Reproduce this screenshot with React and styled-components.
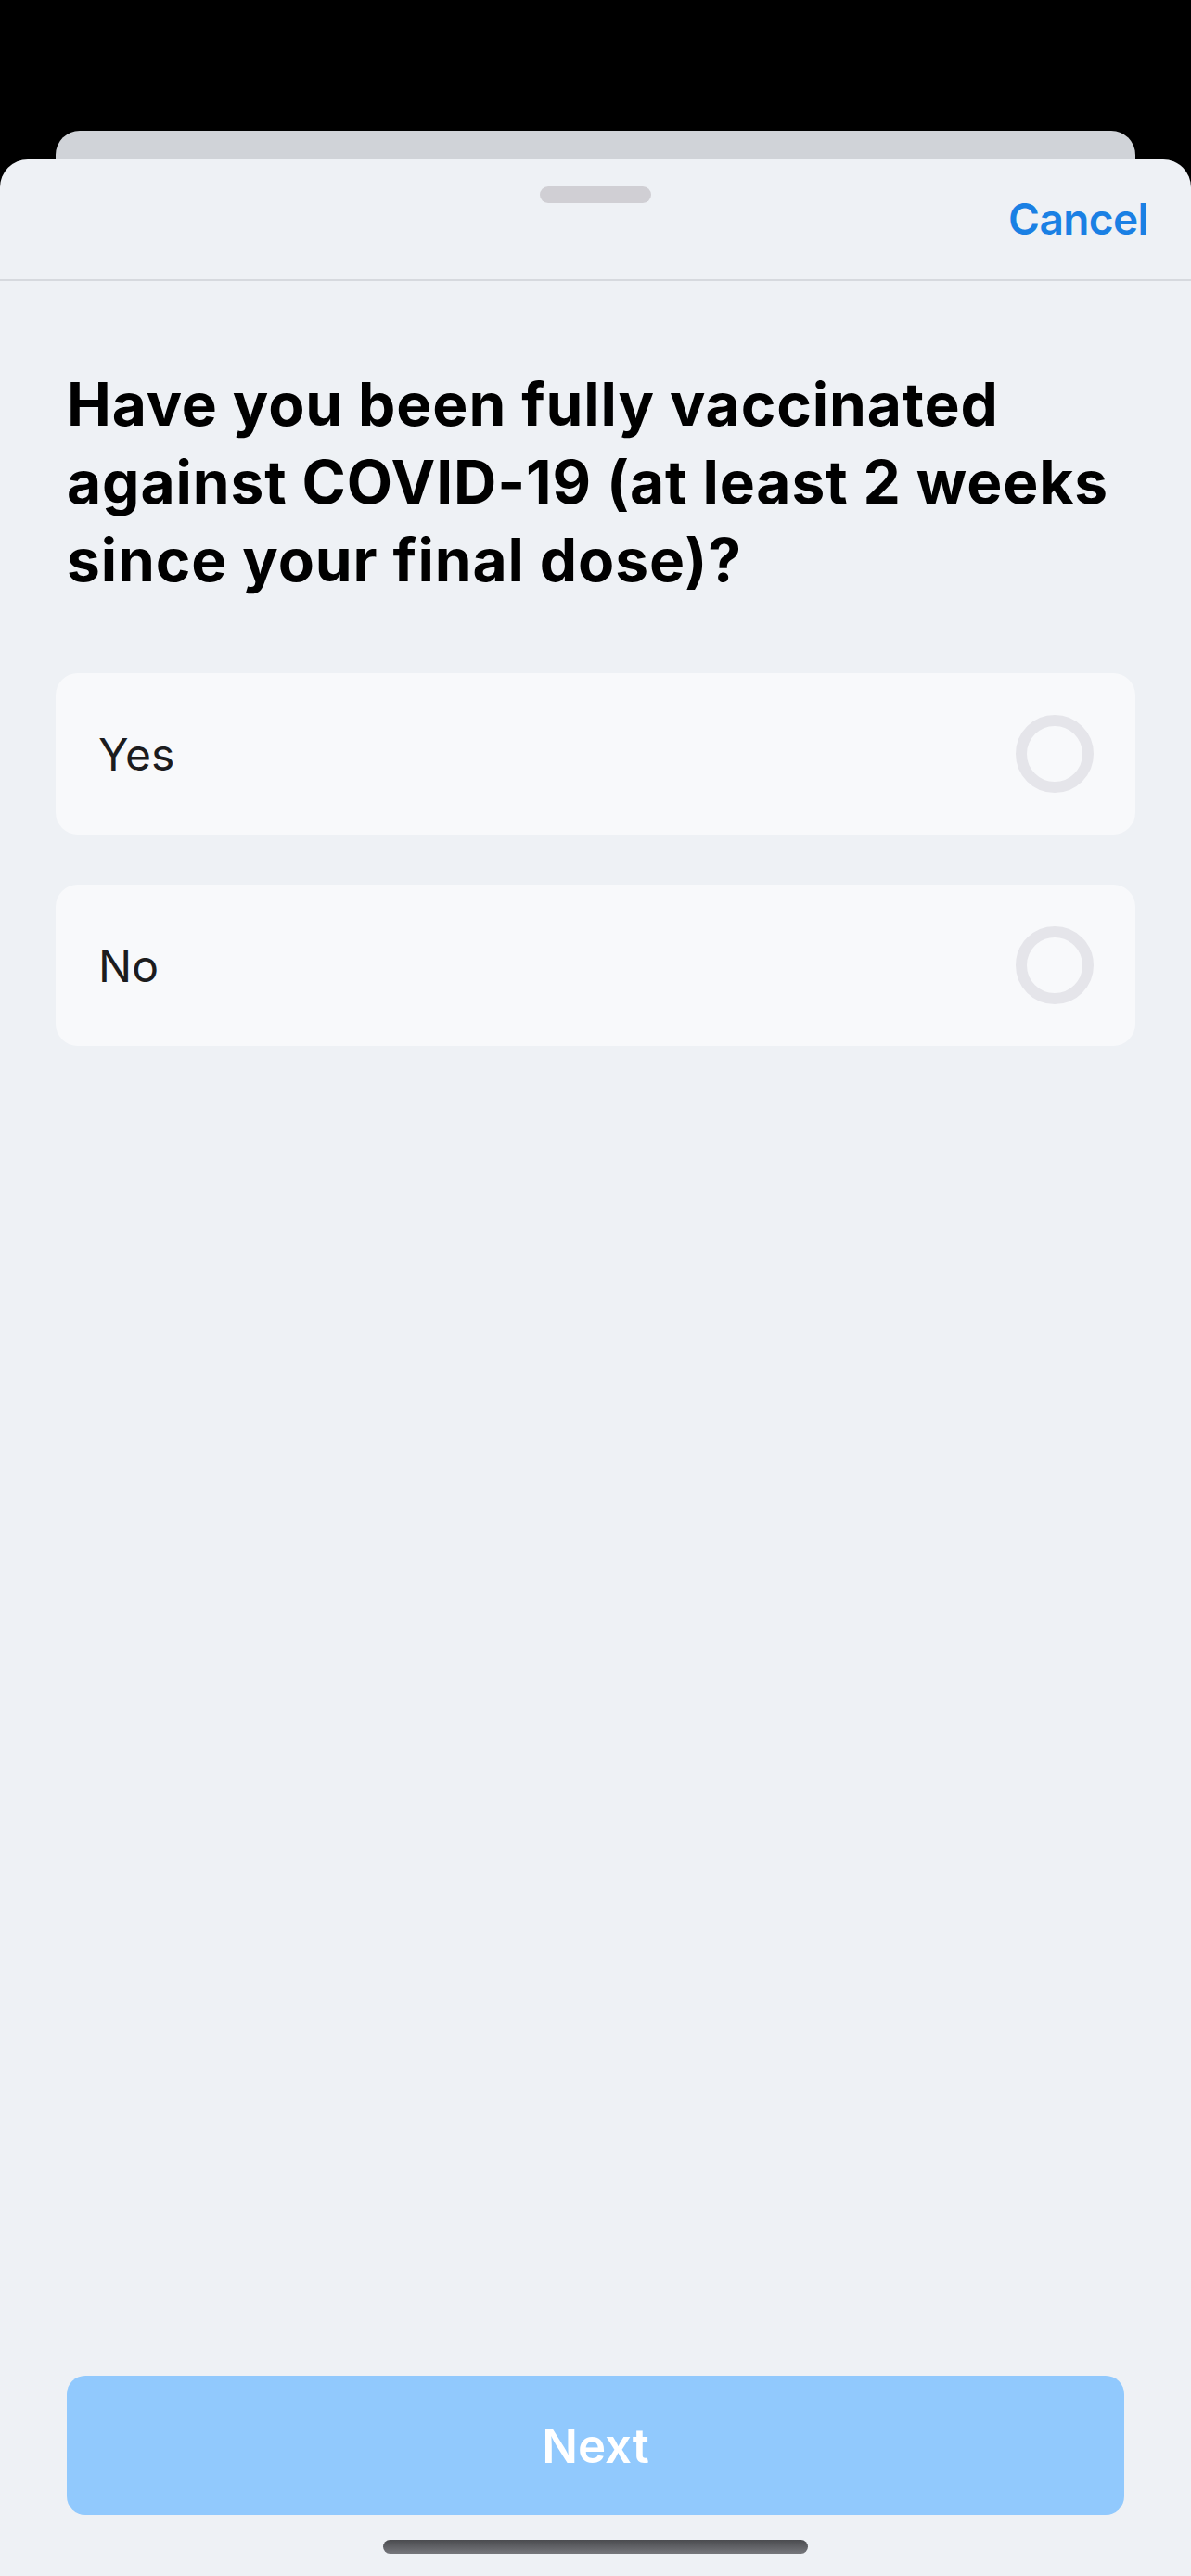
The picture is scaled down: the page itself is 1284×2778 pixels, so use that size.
import styled, { createGlobalStyle } from 'styled-components';

const GlobalStyle = createGlobalStyle`
  html, body {
    margin: 0;
    padding: 0;
    background: #000;
    font-family: Inter, "Noto Sans", "Liberation Sans", sans-serif;
    -webkit-font-smoothing: antialiased;
  }
  * { box-sizing: border-box; }
`

const Screen = styled.div`
  width: 1284px;
  height: 2778px;
  padding-top: 141px;
  display: flex;
  flex-direction: column;
  overflow: hidden;
  background: #000;
`

// the page behind the sheet, peeking out on top
const BackCard = styled.div`
  height: 31px;
  margin: 0 60px;
  flex-shrink: 0;
  background: #d0d3d8;
  border-radius: 26px 26px 0 0;
`

const Sheet = styled.div`
  flex: 1;
  display: flex;
  flex-direction: column;
  background: #eef1f5;
  border-radius: 30px 30px 0 0;
`

const Header = styled.header`
  position: relative;
  height: 131px;
  padding: 36px 46px 0 0;
  display: flex;
  justify-content: flex-end;
  border-bottom: 2px solid #d6d9de;
`

const Grabber = styled.div`
  position: absolute;
  top: 29px;
  left: 50%;
  width: 120px;
  height: 18px;
  margin-left: -60px;
  border-radius: 9px;
  background: #d0cfd4;
`

const CancelButton = styled.button`
  border: none;
  background: none;
  padding: 0;
  font-family: inherit;
  font-size: 46px;
  line-height: 56px;
  height: 56px;
  font-weight: 600;
  letter-spacing: -0.6px;
  color: #1a80e4;
`

const Content = styled.main`
  flex: 1;
  display: flex;
  flex-direction: column;
  padding: 91px 60px 0;
`

const Question = styled.h1`
  margin: 0 0 80px;
  padding: 0 0 0 12px;
  font-size: 64px;
  line-height: 84px;
  font-weight: 700;
  color: #000;
  letter-spacing: 0.9px;
`

const Options = styled.div`
  display: flex;
  flex-direction: column;
  gap: 54px;
`

const Option = styled.label`
  height: 174px;
  padding: 0 45px 0 46px;
  display: flex;
  align-items: center;
  justify-content: space-between;
  background: #f8f9fb;
  border-radius: 24px;
`

const OptionText = styled.span`
  font-size: 48px;
  font-weight: 400;
  color: #1c1c1e;
`

const Radio = styled.span`
  width: 84px;
  height: 84px;
  border-radius: 50%;
  border: 12px solid ${(props) => (props.checked ? '#1a80e4' : '#e5e5ea')};
`

const Footer = styled.footer`
  display: flex;
  flex-direction: column;
  align-items: center;
  padding: 0 72px 24px;
  gap: 27px;
`

const NextButton = styled.button`
  width: 100%;
  height: 150px;
  border: none;
  border-radius: 20px;
  background: #91c9fd;
  color: #fff;
  font-family: inherit;
  font-size: 51px;
  font-weight: 600;
`

const HomeIndicator = styled.div`
  width: 458px;
  height: 15px;
  border-radius: 8px;
  background: linear-gradient(#4a4b4f, #76777c);
`

const answers = ['Yes', 'No']

const App = () => {
  return (
    <>
      <GlobalStyle />
      <Screen>
        <BackCard />
        <Sheet>
          <Header>
            <Grabber />
            <CancelButton>Cancel</CancelButton>
          </Header>
          <Content>
            <Question>
              Have you been fully vaccinated against COVID-19 (at least 2 weeks since your final dose)?
            </Question>
            <Options>
              {answers.map((a) => (
                <Option key={a}>
                  <OptionText>{a}</OptionText>
                  <Radio />
                </Option>
              ))}
            </Options>
          </Content>
          <Footer>
            <NextButton disabled>Next</NextButton>
            <HomeIndicator />
          </Footer>
        </Sheet>
      </Screen>
    </>
  )
}

export default App
